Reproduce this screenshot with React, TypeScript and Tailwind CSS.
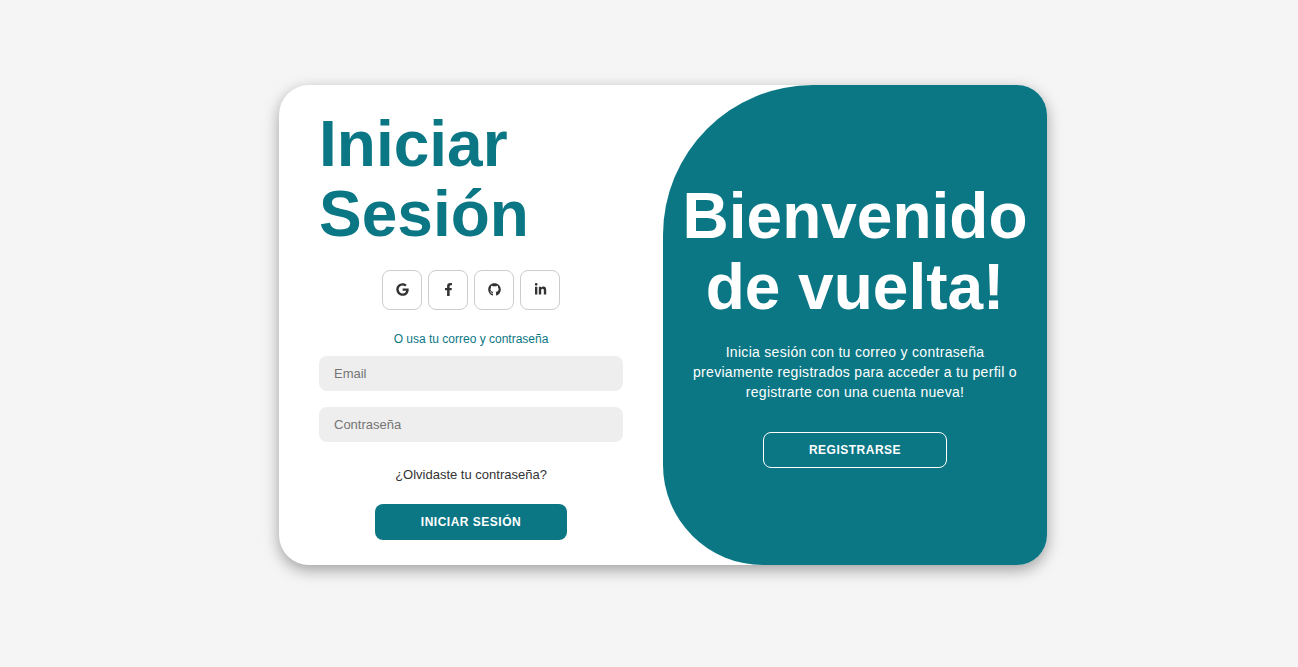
import React from "react";
import { FaGoogle, FaFacebookF, FaGithub, FaLinkedinIn } from "react-icons/fa";

const socials = [FaGoogle, FaFacebookF, FaGithub, FaLinkedinIn];

export default function App() {
  return (
    <div className="flex h-[667px] justify-center bg-[#f5f5f5] pl-7 pt-[85px] font-['Liberation_Sans',Arial,sans-serif]">
      <main className="flex h-[480px] w-[768px] overflow-hidden rounded-[30px] bg-white shadow-[0_5px_15px_rgba(0,0,0,0.35)]">
        <form className="flex w-1/2 flex-col items-center px-10 pt-6" onSubmit={(e) => e.preventDefault()}>
          <h1 className="w-full text-[64px] font-bold leading-[70px] text-[#0b7785]">Iniciar Sesión</h1>
          <div className="mt-[21px] flex gap-1.5">
            {socials.map((Icon, i) => (
              <a key={i} href="#" className="flex size-10 items-center justify-center rounded-[20%] border border-[#ccc] pb-px pl-px text-[13px] text-[#333]">
                <Icon />
              </a>
            ))}
          </div>
          <span className="mt-5 text-[12px] leading-[18px] text-[#0b7785]">O usa tu correo y contraseña</span>
          <input type="email" placeholder="Email" className="mt-2 h-[35px] w-full rounded-lg bg-[#eee] px-[15px] text-[13px] outline-none placeholder:text-[#757575]" />
          <input type="password" placeholder="Contraseña" className="mt-4 h-[35px] w-full rounded-lg bg-[#eee] px-[15px] text-[13px] outline-none placeholder:text-[#757575]" />
          <a href="#" className="mt-6 text-[13px] leading-[18px] text-[#333]">¿Olvidaste tu contraseña?</a>
          <button className="mt-5 h-9 w-48 rounded-lg bg-[#0b7785] text-[12px] font-bold tracking-[0.5px] text-white">INICIAR SESIÓN</button>
        </form>
        <section className="flex w-1/2 flex-col items-center rounded-tl-[150px] rounded-bl-[100px] bg-[#0b7785] pt-24 text-center text-white">
          <h1 className="text-[64px] font-bold leading-[71px]">Bienvenido<br />de vuelta!</h1>
          <p className="mt-[19px] px-[30px] text-[14px] leading-5 tracking-[0.3px]">Inicia sesión con tu correo y contraseña previamente registrados para acceder a tu perfil o registrarte con una cuenta nueva!</p>
          <button className="mt-[30px] h-9 w-[184px] rounded-lg border border-white text-[12px] font-bold tracking-[0.5px]">REGISTRARSE</button>
        </section>
      </main>
    </div>
  );
}
